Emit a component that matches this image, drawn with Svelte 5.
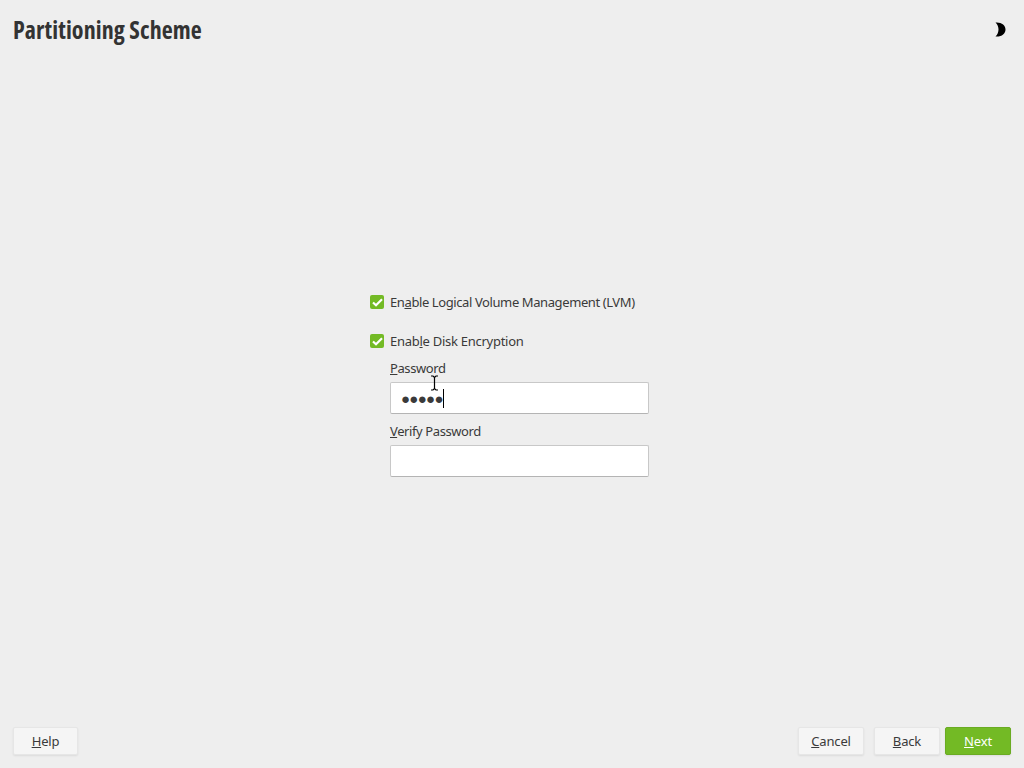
<script>
  const actions = [
    { key: 'C', rest: 'ancel', kind: 'plain' },
    { key: 'B', rest: 'ack', kind: 'plain' },
    { key: 'N', rest: 'ext', kind: 'primary' }
  ];
</script>

<div class="page">
  <header class="header">
    <h1>Partitioning Scheme</h1>
    <svg class="theme" width="11" height="15" viewBox="0 0 11 15" aria-hidden="true">
      <path d="M0.5 0.5 C6.5 0 10.5 3 10.5 7.5 C10.5 12 6.5 15 0.5 14.5 C2.5 12.5 3.5 10 3.5 7.5 C3.5 5 2.5 2.5 0.5 0.5 Z" fill="#000" />
    </svg>
  </header>

  <main class="main">
    <div class="form">
      <label class="check first">
        <span class="box">
          <svg width="11" height="9" viewBox="0 0 11 9"><path d="M1 4.5 L4 7.2 L10 1.2" fill="none" stroke="#fff" stroke-width="2.2" /></svg>
        </span>
        <span>En<u>a</u>ble Logical Volume Management (LVM)</span>
      </label>
      <label class="check second-check">
        <span class="box">
          <svg width="11" height="9" viewBox="0 0 11 9"><path d="M1 4.5 L4 7.2 L10 1.2" fill="none" stroke="#fff" stroke-width="2.2" /></svg>
        </span>
        <span>Enab<u>l</u>e Disk Encryption</span>
      </label>
      <div class="fields">
        <div class="label"><u>P</u>assword</div>
        <div class="input">
          <span class="dots">●●●●●</span><span class="caret"></span>
          <svg class="ibeam" width="9" height="16" viewBox="0 0 9 16" aria-hidden="true">
            <path d="M1 1 H3 L4.5 2.5 L6 1 H8 M4.5 2.5 V13.5 M1 15 H3 L4.5 13.5 L6 15 H8" fill="none" stroke="#000" stroke-width="1.2" />
          </svg>
        </div>
        <div class="label second"><u>V</u>erify Password</div>
        <div class="input"></div>
      </div>
    </div>
  </main>

  <footer class="footer">
    <button class="btn help"><u>H</u>elp</button>
    <div class="actions">
      {#each actions as a}
        <button class="btn {a.kind}"><u>{a.key}</u>{a.rest}</button>
      {/each}
    </div>
  </footer>
</div>

<style>
  :global(body) {
    margin: 0;
    background: #eeeeee;
  }

  .page {
    width: 1024px;
    height: 768px;
    display: flex;
    flex-direction: column;
    font-family: "Noto Sans", sans-serif;
    font-size: 13px;
    letter-spacing: -0.4px;
    color: #3a3a3a;
    overflow: hidden;
  }

  .header {
    display: flex;
    justify-content: space-between;
    align-items: center;
    height: 58px;
    padding: 0 18px 0 13px;
    margin-bottom: 2px;
    flex: none;
  }

  h1 {
    margin: 0;
    font-family: "Open Sans", sans-serif;
    font-stretch: 75%;
    font-weight: 700;
    font-size: 24px;
    letter-spacing: 0.1px;
    color: #333;
  }

  .main {
    flex: 1;
    padding-top: 234px;
    padding-left: 370px;
  }

  .form {
    width: 280px;
  }

  .check {
    display: flex;
    align-items: center;
    gap: 6px;
    height: 16px;
    line-height: 16px;
  }

  .check.first {
    margin-bottom: 23px;
  }

  .second-check {
    letter-spacing: -0.27px;
  }

  .box {
    width: 14px;
    height: 14px;
    border-radius: 2px;
    background: #73ba25;
    display: flex;
    align-items: center;
    justify-content: center;
    flex: none;
  }

  .fields {
    margin-left: 20px;
    width: 259px;
    padding-top: 11px;
  }

  .label {
    line-height: 16px;
    margin-bottom: 6px;
  }

  .label.second {
    margin-top: 9px;
  }

  .input {
    position: relative;
    box-sizing: border-box;
    height: 32px;
    background: #fff;
    border: 1px solid #c8c8c8;
    border-bottom-color: #b4b4b4;
    border-radius: 2px;
    padding-left: 10px;
    display: flex;
    align-items: center;
  }

  .dots {
    font-size: 15px;
    letter-spacing: -0.7px;
    color: #3a3a3a;
  }

  .caret {
    width: 1px;
    height: 19px;
    background: #000;
  }

  .ibeam {
    position: absolute;
    left: 39px;
    top: -8px;
  }

  .footer {
    flex: none;
    display: flex;
    justify-content: space-between;
    padding: 0 13px 13px 13px;
  }

  .actions {
    display: flex;
    gap: 10px;
  }

  .btn {
    font: inherit;
    letter-spacing: -0.15px;
    height: 28px;
    padding: 0;
    background: #f5f5f5;
    border: 1px solid #e6e6e6;
    border-radius: 2px;
    box-shadow: 0 1px 2px rgba(0, 0, 0, 0.08);
    color: #3a3a3a;
    width: 66px;
  }

  .help {
    width: 65px;
  }

  .actions .btn:last-child {
    margin-left: -5px;
  }

  .primary {
    background: #73ba25;
    border-color: #6aab22;
    color: #fff;
    height: 28px;
  }
</style>
